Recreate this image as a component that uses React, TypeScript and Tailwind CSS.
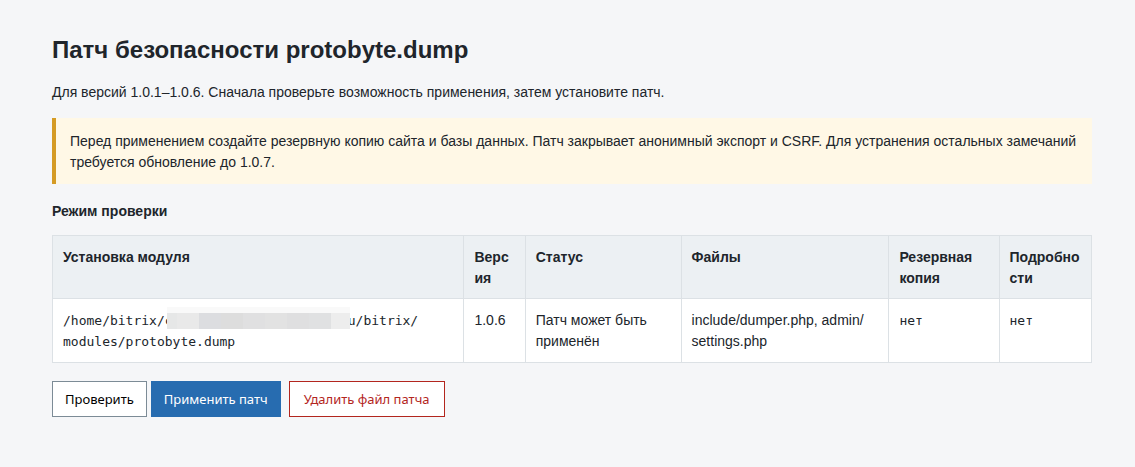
import type { ReactNode } from 'react';

const columns = [
  { title: 'Установка модуля', width: 'w-[39.6%]' },
  { title: 'Версия', width: 'w-[5.9%]' },
  { title: 'Статус', width: 'w-[15%]' },
  { title: 'Файлы', width: 'w-[20%]' },
  { title: 'Резервная копия', width: 'w-[10.6%]' },
  { title: 'Подробности', width: 'w-[8.9%]' },
];

const maskTones = [
  'w-[10px] bg-[#e6e7e7]',
  'w-[22px] bg-[#e9e9e9]',
  'w-[22px] bg-[#dcdde0]',
  'w-[22px] bg-[#dddddd]',
  'w-[22px] bg-[#e0e0e1]',
  'w-[22px] bg-[#e2e2e2]',
  'w-[22px] bg-[#dfdfe0]',
  'w-[22px] bg-[#e0e1e2]',
  'w-[19px] bg-[#ededed]',
];

function HiddenHost() {
  return (
    <span className="relative inline-block w-[183px]">
      c
      <span className="absolute top-[-3px] left-[2px] flex h-[22px] w-[183px] border-t-[6px] border-[#f9f9f9]">
        {maskTones.map((tone, i) => (
          <span key={i} className={tone} />
        ))}
      </span>
    </span>
  );
}

function Code({ children }: { children: ReactNode }) {
  return <code className="font-['DejaVu_Sans_Mono',monospace] text-[13px]">{children}</code>;
}

function Cell({ children }: { children: ReactNode }) {
  return (
    <td className="border border-[#dce1e5] px-2.5 pt-[11px] pb-2.5 align-top">{children}</td>
  );
}

function Button({ className, children }: { className: string; children: ReactNode }) {
  return (
    <button
      type="button"
      className={`h-9 border font-['Noto_Sans',sans-serif] text-[13px] leading-5 ${className}`}
    >
      {children}
    </button>
  );
}

export default function App() {
  return (
    <main className="min-h-screen bg-[#f5f6f8] pt-8 pr-[43px] pb-12 pl-[52px] font-['Liberation_Sans',Arial,sans-serif] text-sm leading-[21px] text-[#20252b]">
      <h1 className="text-2xl leading-9 font-bold">Патч безопасности protobyte.dump</h1>
      <p className="mt-3.5">
        Для версий 1.0.1–1.0.6. Сначала проверьте возможность применения, затем установите патч.
      </p>
      <p className="mt-[15px] border-l-4 border-[#d59b24] bg-[#fff8e6] px-3.5 pt-[13px] pb-[11px]">
        Перед применением создайте резервную копию сайта и базы данных. Патч закрывает анонимный
        экспорт и CSRF. Для устранения остальных замечаний требуется обновление до 1.0.7.
      </p>
      <p className="mt-[17px] font-bold">Режим проверки</p>
      <table className="mt-[13px] w-full table-fixed border-collapse bg-white text-left wrap-anywhere">
        <thead className="bg-[#ecf0f3]">
          <tr>
            {columns.map((column) => (
              <th
                key={column.title}
                scope="col"
                className={`border border-[#dce1e5] px-2.5 pt-[11px] pb-[9px] align-top font-bold ${column.width}`}
              >
                {column.title}
              </th>
            ))}
          </tr>
        </thead>
        <tbody>
          <tr>
            <Cell>
              <Code>
                /home/bitrix/
                <HiddenHost />
                u/bitrix/
                <wbr />
                modules/protobyte.dump
              </Code>
            </Cell>
            <Cell>1.0.6</Cell>
            <Cell>Патч может быть применён</Cell>
            <Cell>
              include/dumper.php, admin/
              <wbr />
              settings.php
            </Cell>
            <Cell>
              <Code>нет</Code>
            </Cell>
            <Cell>
              <Code>нет</Code>
            </Cell>
          </tr>
        </tbody>
      </table>
      <div className="mt-[18px] flex flex-wrap gap-y-2">
        <Button className="mr-1 border-[#7c8b96] bg-white px-3 text-black">Проверить</Button>
        <Button className="mr-2 border-[#276cb0] bg-[#276cb0] px-3 text-white">Применить патч</Button>
        <Button className="border-[#b3261e] bg-white px-3.5 text-[#b3261e]">Удалить файл патча</Button>
      </div>
    </main>
  );
}
